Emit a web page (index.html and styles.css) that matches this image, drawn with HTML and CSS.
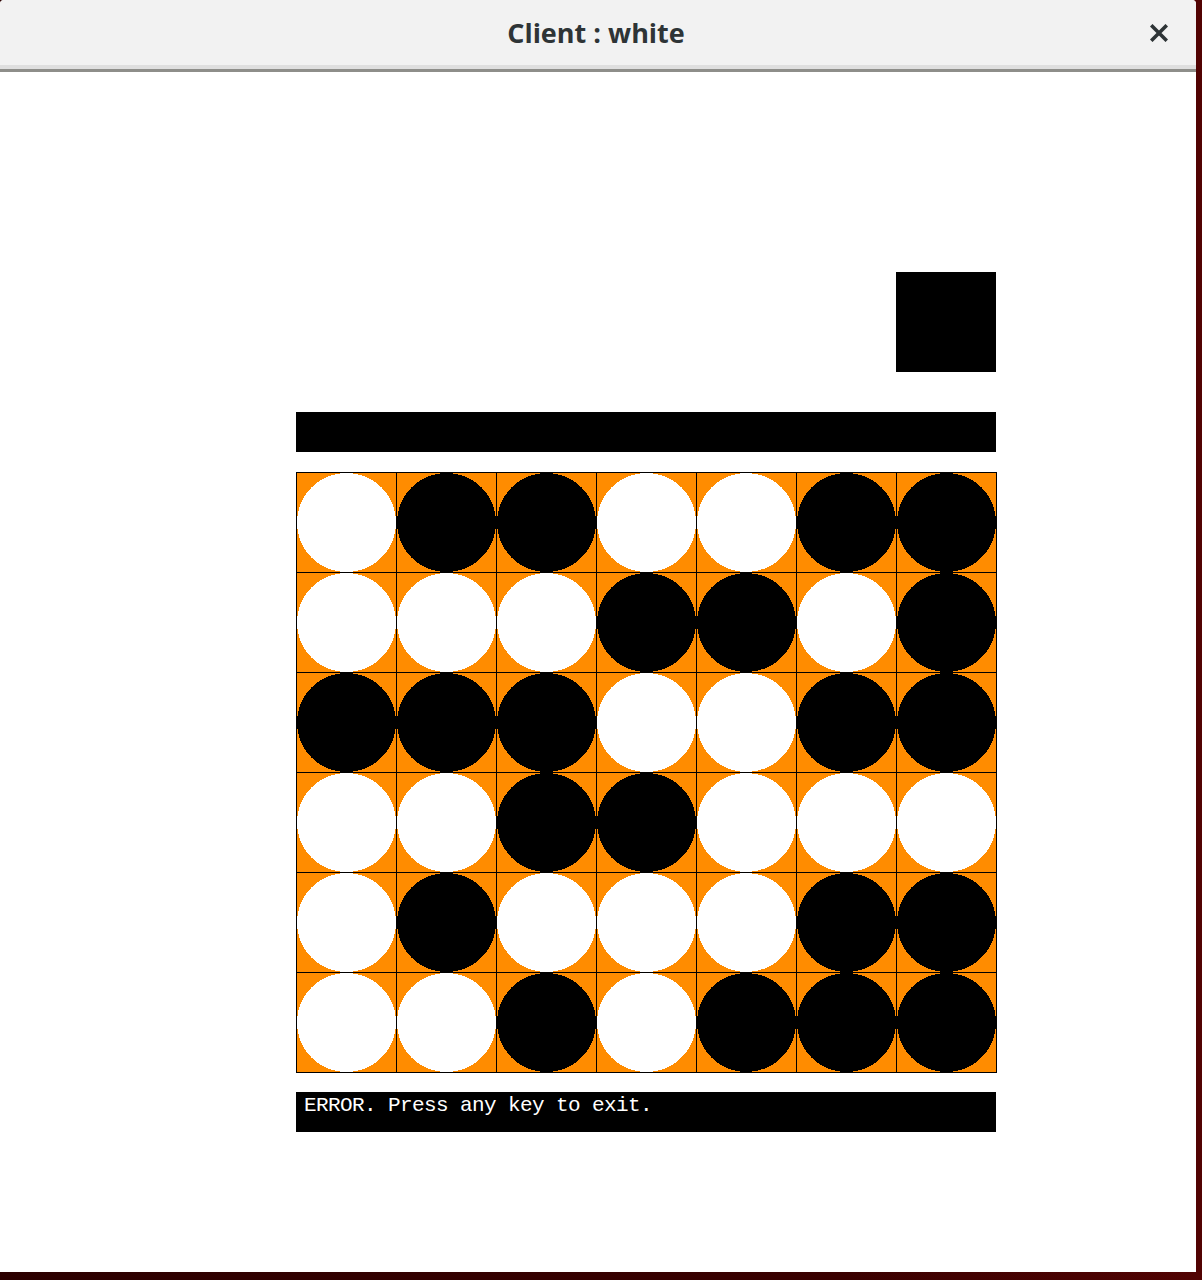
FILE: index.html
```html
<!DOCTYPE html>
<html>
<head>
<meta charset="utf-8">
<title>Client : white</title>
<link rel="stylesheet" href="styles.css">
</head>
<body>
<div class="window">
  <header class="titlebar">
    <div class="title">Client : white</div>
    <button class="close" aria-label="Close">
      <svg width="18" height="18" viewBox="0 0 18 18"><path d="M2.5 2.5 L15.5 15.5 M15.5 2.5 L2.5 15.5" stroke="#2e3436" stroke-width="3.6" stroke-linecap="square" fill="none"/></svg>
    </button>
  </header>
  <main class="content">
    <div class="column">
      <div class="turn-square"></div>
      <div class="status-bar"></div>
      <svg class="board" width="701" height="601" viewBox="0 0 701 601" shape-rendering="crispEdges">
        <rect x="0" y="0" width="701" height="601" fill="#ff8c00"/>
        <g stroke="#000" stroke-width="1">
          <line x1="0.5" y1="0" x2="0.5" y2="601"/>
          <line x1="100.5" y1="0" x2="100.5" y2="601"/>
          <line x1="200.5" y1="0" x2="200.5" y2="601"/>
          <line x1="300.5" y1="0" x2="300.5" y2="601"/>
          <line x1="400.5" y1="0" x2="400.5" y2="601"/>
          <line x1="500.5" y1="0" x2="500.5" y2="601"/>
          <line x1="600.5" y1="0" x2="600.5" y2="601"/>
          <line x1="700.5" y1="0" x2="700.5" y2="601"/>
          <line x1="0" y1="0.5" x2="701" y2="0.5"/>
          <line x1="0" y1="100.5" x2="701" y2="100.5"/>
          <line x1="0" y1="200.5" x2="701" y2="200.5"/>
          <line x1="0" y1="300.5" x2="701" y2="300.5"/>
          <line x1="0" y1="400.5" x2="701" y2="400.5"/>
          <line x1="0" y1="500.5" x2="701" y2="500.5"/>
          <line x1="0" y1="600.5" x2="701" y2="600.5"/>
        </g>
        <g class="pieces">
          <circle cx="50.5" cy="50.5" r="49.5" fill="#fff"/>
          <circle cx="150.5" cy="50.5" r="49.5" fill="#000"/>
          <circle cx="250.5" cy="50.5" r="49.5" fill="#000"/>
          <circle cx="350.5" cy="50.5" r="49.5" fill="#fff"/>
          <circle cx="450.5" cy="50.5" r="49.5" fill="#fff"/>
          <circle cx="550.5" cy="50.5" r="49.5" fill="#000"/>
          <circle cx="650.5" cy="50.5" r="49.5" fill="#000"/>

          <circle cx="50.5" cy="150.5" r="49.5" fill="#fff"/>
          <circle cx="150.5" cy="150.5" r="49.5" fill="#fff"/>
          <circle cx="250.5" cy="150.5" r="49.5" fill="#fff"/>
          <circle cx="350.5" cy="150.5" r="49.5" fill="#000"/>
          <circle cx="450.5" cy="150.5" r="49.5" fill="#000"/>
          <circle cx="550.5" cy="150.5" r="49.5" fill="#fff"/>
          <circle cx="650.5" cy="150.5" r="49.5" fill="#000"/>

          <circle cx="50.5" cy="250.5" r="49.5" fill="#000"/>
          <circle cx="150.5" cy="250.5" r="49.5" fill="#000"/>
          <circle cx="250.5" cy="250.5" r="49.5" fill="#000"/>
          <circle cx="350.5" cy="250.5" r="49.5" fill="#fff"/>
          <circle cx="450.5" cy="250.5" r="49.5" fill="#fff"/>
          <circle cx="550.5" cy="250.5" r="49.5" fill="#000"/>
          <circle cx="650.5" cy="250.5" r="49.5" fill="#000"/>

          <circle cx="50.5" cy="350.5" r="49.5" fill="#fff"/>
          <circle cx="150.5" cy="350.5" r="49.5" fill="#fff"/>
          <circle cx="250.5" cy="350.5" r="49.5" fill="#000"/>
          <circle cx="350.5" cy="350.5" r="49.5" fill="#000"/>
          <circle cx="450.5" cy="350.5" r="49.5" fill="#fff"/>
          <circle cx="550.5" cy="350.5" r="49.5" fill="#fff"/>
          <circle cx="650.5" cy="350.5" r="49.5" fill="#fff"/>

          <circle cx="50.5" cy="450.5" r="49.5" fill="#fff"/>
          <circle cx="150.5" cy="450.5" r="49.5" fill="#000"/>
          <circle cx="250.5" cy="450.5" r="49.5" fill="#fff"/>
          <circle cx="350.5" cy="450.5" r="49.5" fill="#fff"/>
          <circle cx="450.5" cy="450.5" r="49.5" fill="#fff"/>
          <circle cx="550.5" cy="450.5" r="49.5" fill="#000"/>
          <circle cx="650.5" cy="450.5" r="49.5" fill="#000"/>

          <circle cx="50.5" cy="550.5" r="49.5" fill="#fff"/>
          <circle cx="150.5" cy="550.5" r="49.5" fill="#fff"/>
          <circle cx="250.5" cy="550.5" r="49.5" fill="#000"/>
          <circle cx="350.5" cy="550.5" r="49.5" fill="#fff"/>
          <circle cx="450.5" cy="550.5" r="49.5" fill="#000"/>
          <circle cx="550.5" cy="550.5" r="49.5" fill="#000"/>
          <circle cx="650.5" cy="550.5" r="49.5" fill="#000"/>
        </g>
      </svg>
      <div class="message-bar">ERROR. Press any key to exit.</div>
    </div>
  </main>
</div>
</body>
</html>
```

FILE: styles.css
```css
html, body {
  margin: 0;
  padding: 0;
}

body {
  width: 1202px;
  height: 1280px;
  background: linear-gradient(90deg, #2c0000 0%, #3a0000 70%, #520303 100%);
  overflow: hidden;
}

.window {
  width: 1196px;
  height: 1272px;
  background: #ffffff;
  border-radius: 4px 4px 0 0;
  display: flex;
  flex-direction: column;
  overflow: hidden;
}

.titlebar {
  height: 69px;
  flex: 0 0 auto;
  background: linear-gradient(#f2f2f2 0, #f2f2f2 65px, #dfdfdf 65px, #dfdfdf 69px);
  border-bottom: 3px solid #8e8e8a;
  display: flex;
  align-items: center;
  justify-content: center;
  position: relative;
}

.title {
  font-family: "Open Sans", "Noto Sans", sans-serif;
  font-weight: 700;
  font-size: 27px;
  color: #2e3436;
  margin-top: -4px;
  margin-left: -4px;
}

.close {
  position: absolute;
  right: 28px;
  top: 24px;
  width: 18px;
  height: 18px;
  padding: 0;
  border: 0;
  background: transparent;
  display: flex;
}

.content {
  flex: 1 1 auto;
  padding: 200px 0 0 296px;
}

.column {
  width: 701px;
  display: flex;
  flex-direction: column;
}

.turn-square {
  width: 100px;
  height: 100px;
  background: #000;
  align-self: flex-end;
  margin-right: 1px;
  margin-bottom: 40px;
}

.status-bar {
  width: 700px;
  height: 40px;
  background: #000;
  margin-bottom: 20px;
}

.board {
  display: block;
  margin-bottom: 19px;
}

.message-bar {
  width: 700px;
  height: 40px;
  background: #000;
  color: #fff;
  box-sizing: border-box;
  padding: 3px 0 0 8px;
  font-family: "Liberation Mono", "DejaVu Sans Mono", monospace;
  font-size: 21px;
  letter-spacing: -0.6px;
  line-height: 22px;
  white-space: pre;
}
```
